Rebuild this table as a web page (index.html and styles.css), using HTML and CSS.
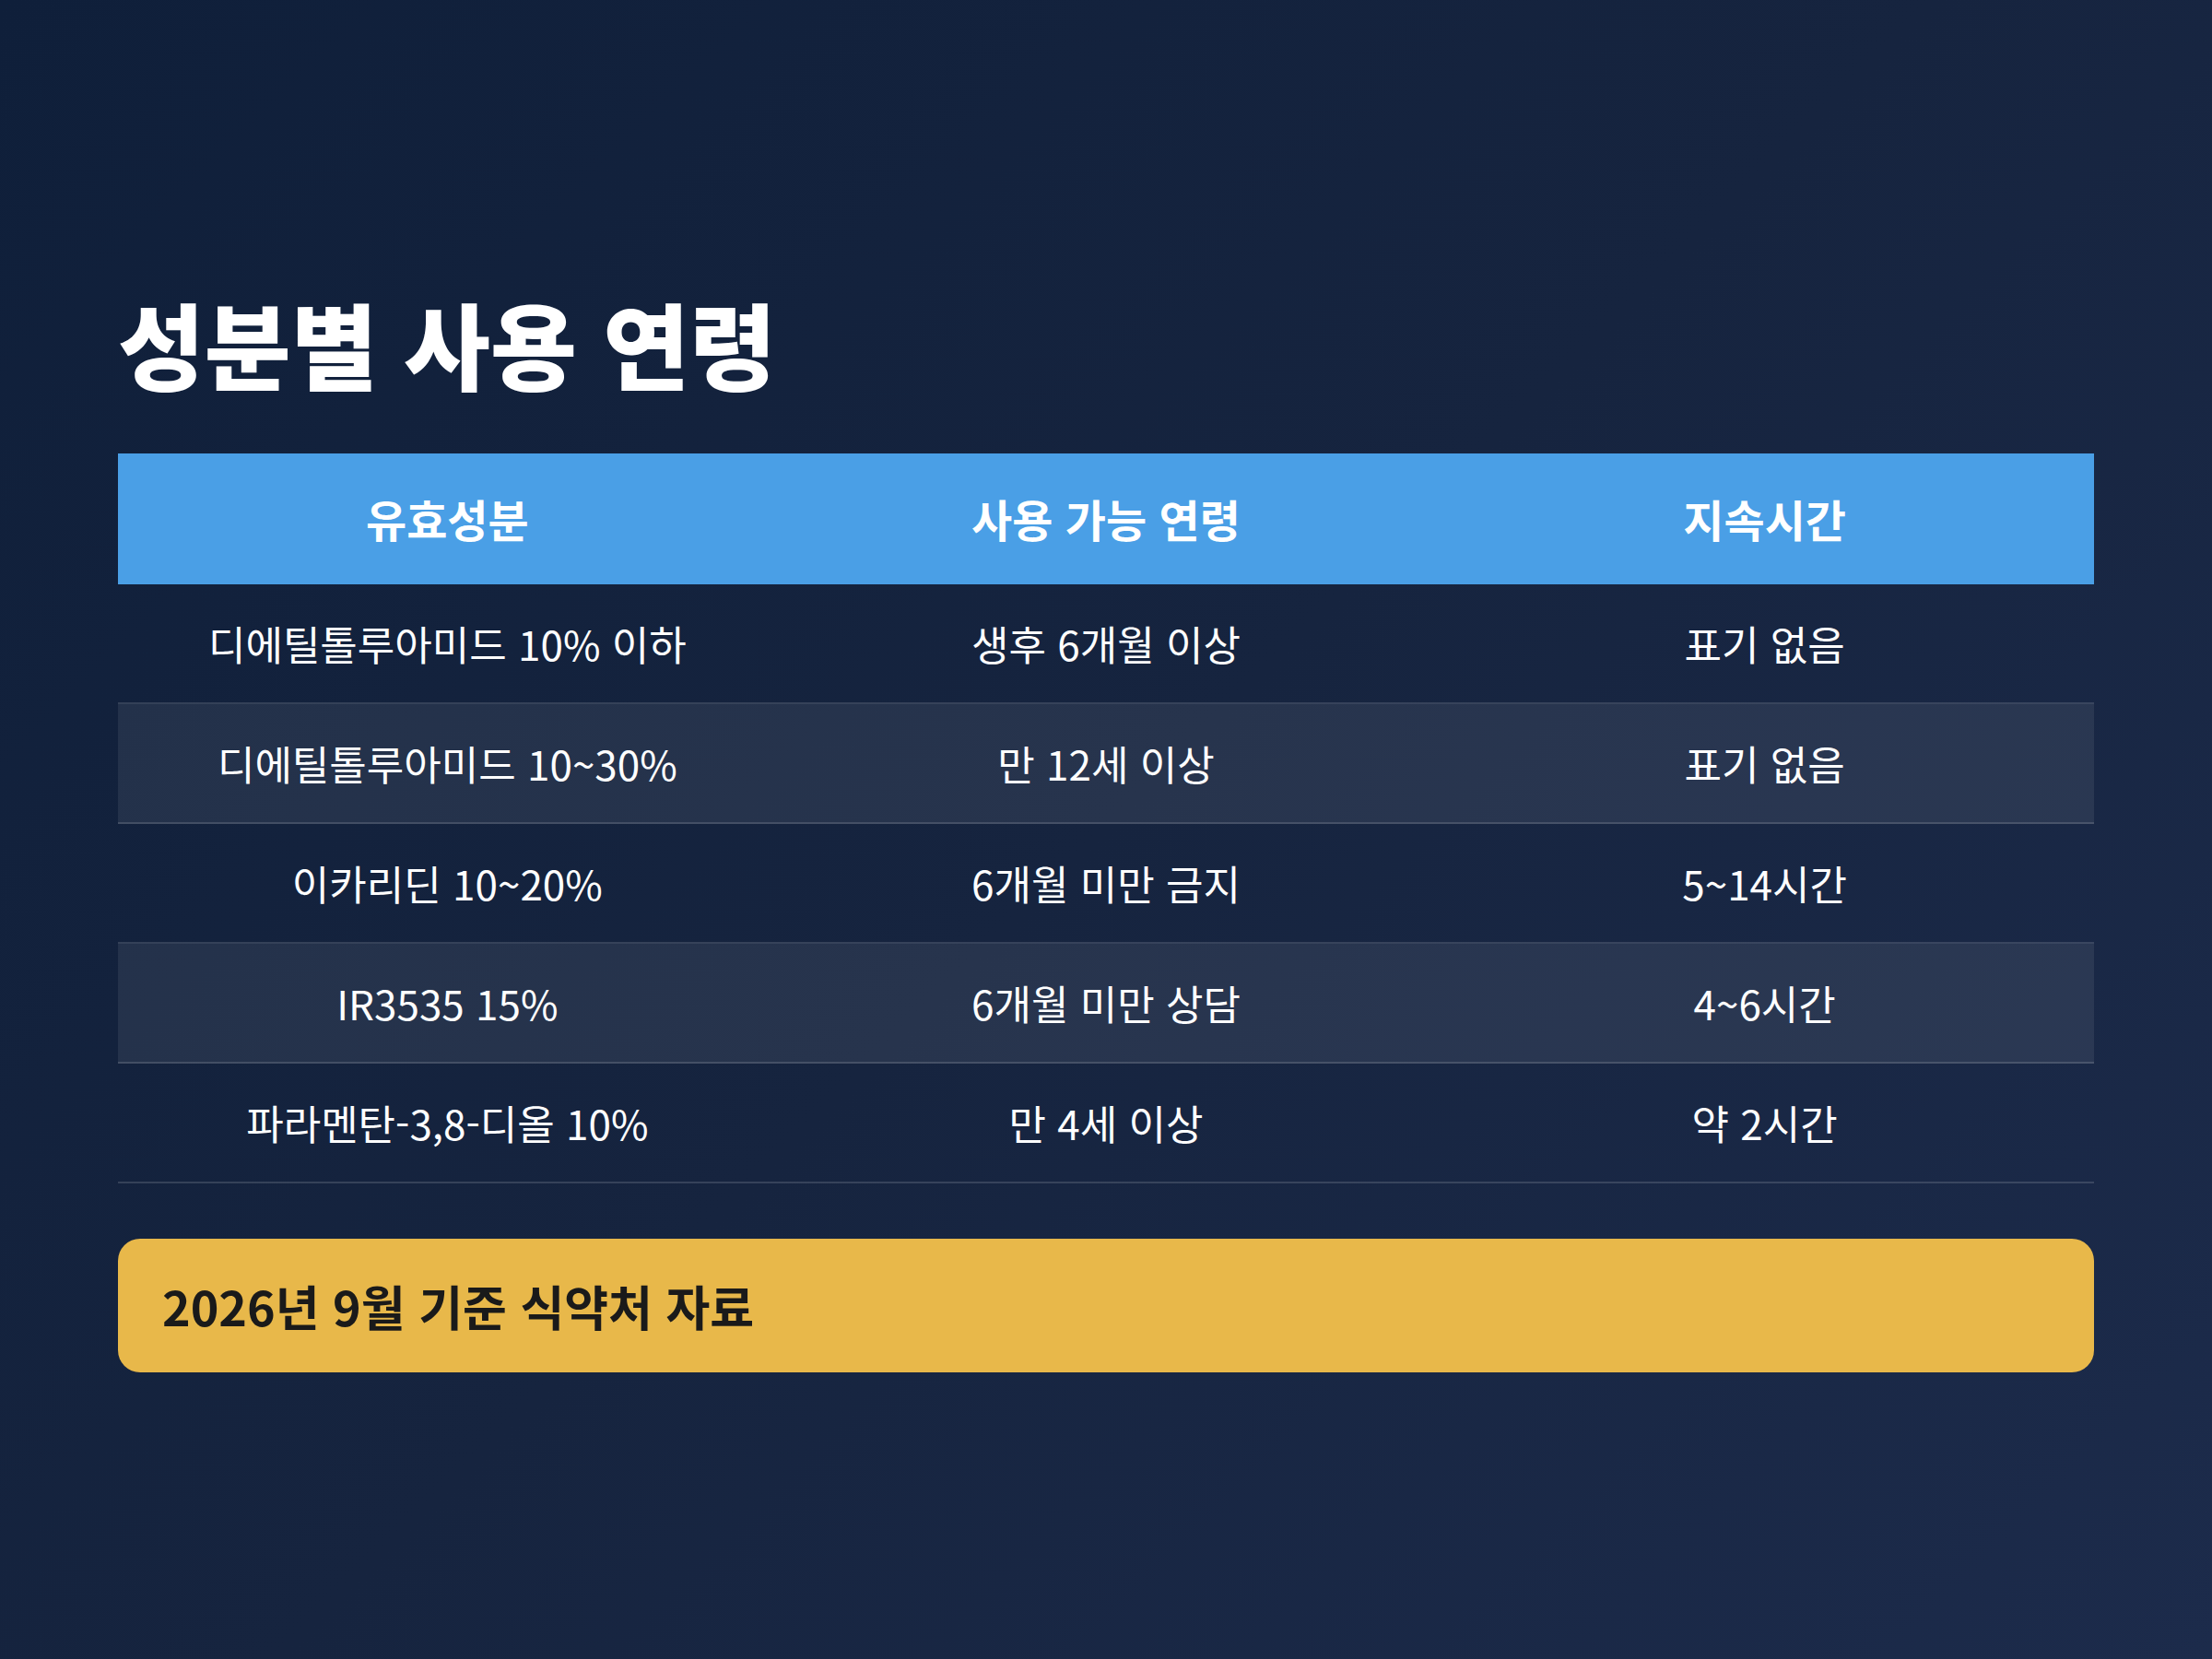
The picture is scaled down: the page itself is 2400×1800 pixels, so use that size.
FILE: index.html
```html
<!DOCTYPE html>
<html lang="ko">
<head>
<meta charset="utf-8">
<title>성분별 사용 연령</title>
<link rel="stylesheet" href="styles.css">
</head>
<body>
<main class="slide">
  <h1 class="title">성분별 사용 연령</h1>
  <div class="table">
    <div class="row head">
      <div class="cell">유효성분</div>
      <div class="cell">사용 가능 연령</div>
      <div class="cell">지속시간</div>
    </div>
    <div class="row">
      <div class="cell">디에틸톨루아미드 10% 이하</div>
      <div class="cell">생후 6개월 이상</div>
      <div class="cell">표기 없음</div>
    </div>
    <div class="row alt">
      <div class="cell">디에틸톨루아미드 10~30%</div>
      <div class="cell">만 12세 이상</div>
      <div class="cell">표기 없음</div>
    </div>
    <div class="row">
      <div class="cell">이카리딘 10~20%</div>
      <div class="cell">6개월 미만 금지</div>
      <div class="cell">5~14시간</div>
    </div>
    <div class="row alt">
      <div class="cell">IR3535 15%</div>
      <div class="cell">6개월 미만 상담</div>
      <div class="cell">4~6시간</div>
    </div>
    <div class="row">
      <div class="cell">파라멘탄-3,8-디올 10%</div>
      <div class="cell">만 4세 이상</div>
      <div class="cell">약 2시간</div>
    </div>
  </div>
  <div class="note">2026년 9월 기준 식약처 자료</div>
</main>
</body>
</html>
```

FILE: styles.css
```css
* { box-sizing: border-box; }
html, body { margin: 0; padding: 0; }
body {
  width: 2400px;
  height: 1800px;
  background: linear-gradient(135deg, #0f1f3a 0%, #16243f 50%, #1c2b4b 100%);
  font-family: "Noto Sans CJK KR", "Noto Sans", sans-serif;
  color: #ffffff;
}
.slide {
  display: flex;
  flex-direction: column;
  padding: 307px 128px 0;
}
.title {
  margin: 0;
  font-size: 102px;
  font-weight: 900;
  line-height: 130px;
  letter-spacing: 0;
}
.table {
  margin-top: 55px;
  display: flex;
  flex-direction: column;
}
.row {
  display: grid;
  grid-template-columns: 1fr 1fr 1fr;
  height: 130px;
  align-items: center;
  border-bottom: 2px solid rgba(255, 255, 255, 0.14);
}
.row.alt { background: rgba(255, 255, 255, 0.075); }
.row.head {
  height: 142px;
  background: #4a9fe6;
  border-bottom: none;
  font-weight: 700;
}
.cell {
  text-align: center;
  font-size: 44px;
  line-height: 1.2;
}
.row.head .cell { font-size: 48px; }
.note {
  margin-top: 60px;
  height: 145px;
  display: flex;
  align-items: center;
  padding: 0 48px;
  background: #e8b84a;
  border-radius: 24px;
  color: #1a1a1a;
  font-size: 52px;
  font-weight: 700;
}
```
